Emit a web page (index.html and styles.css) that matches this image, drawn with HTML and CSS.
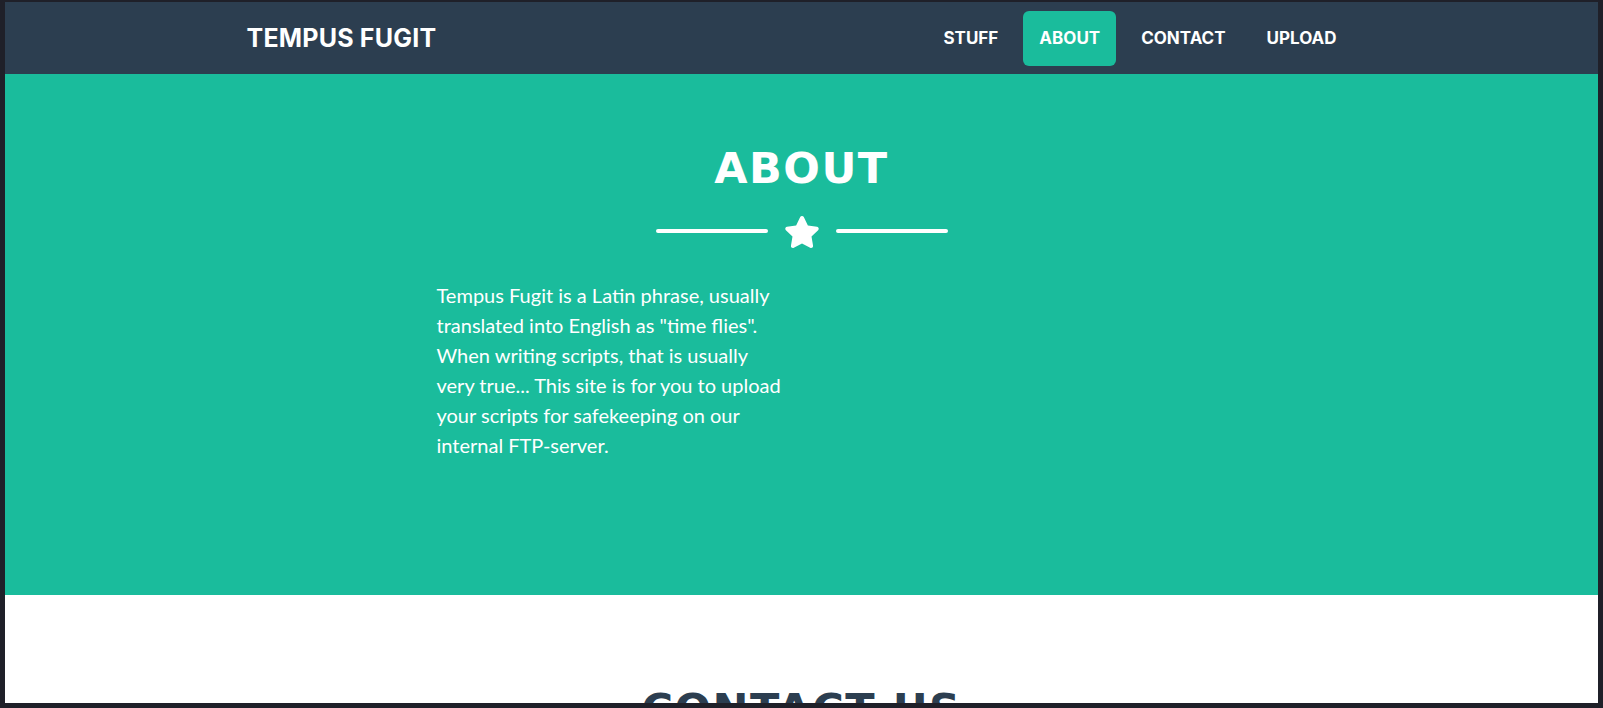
FILE: index.html
```html
<!DOCTYPE html>
<html lang="en">
<head>
<meta charset="utf-8">
<title>Tempus Fugit</title>
<link rel="stylesheet" href="styles.css">
</head>
<body>
<div class="frame">
  <nav class="navbar">
    <div class="container nav-inner">
      <a class="brand" href="#">Tempus Fugit</a>
      <ul class="nav-list">
        <li><a class="nav-link" href="#">Stuff</a></li>
        <li><a class="nav-link active" href="#">About</a></li>
        <li><a class="nav-link" href="#">Contact</a></li>
        <li><a class="nav-link" href="#">Upload</a></li>
      </ul>
    </div>
  </nav>

  <section class="section about">
    <div class="container">
      <h2 class="section-heading">About</h2>
      <div class="divider">
        <span class="divider-line"></span>
        <svg class="divider-icon" viewBox="0 0 576 512" width="36" height="32" aria-hidden="true"><path fill="currentColor" d="M259.3 17.8L194 150.2 47.9 171.5c-26.2 3.8-36.7 36.1-17.7 54.6l105.7 103-25 145.5c-4.5 26.3 23.2 46 46.4 33.7L288 439.6l130.7 68.7c23.2 12.2 50.9-7.4 46.4-33.7l-25-145.5 105.7-103c19-18.5 8.5-50.8-17.7-54.6L382 150.2 316.7 17.8c-11.7-23.6-45.6-23.9-57.4 0z"/></svg>
        <span class="divider-line"></span>
      </div>
      <div class="about-row">
        <div class="about-col">
          <p class="lead">Tempus Fugit is a Latin phrase, usually translated into English as "time flies". When writing scripts, that is usually very true... This site is for you to upload your scripts for safekeeping on our internal FTP-server.</p>
        </div>
        <div class="about-col"></div>
      </div>
    </div>
  </section>

  <section class="section contact">
    <div class="container">
      <h2 class="section-heading dark">Contact Us</h2>
    </div>
  </section>
</div>
</body>
</html>
```

FILE: styles.css
```css
* { box-sizing: border-box; }

html, body {
  margin: 0;
  padding: 0;
  height: 100%;
  overflow: hidden;
}

body {
  background: #1f2029;
  font-family: "Lato", "Liberation Sans", sans-serif;
}

.frame {
  margin: 2px 5px 0 5px;
  height: 701px;
  overflow: hidden;
  background: #ffffff;
}

.container {
  width: 1140px;
  margin: 0 auto;
  padding: 0 15px;
}

/* NAV */
.navbar {
  background: #2c3e50;
  height: 72px;
}

.nav-inner {
  height: 72px;
  display: flex;
  align-items: center;
  justify-content: space-between;
}

.brand {
  font-family: "Inter", "DejaVu Sans", sans-serif;
  font-weight: 700;
  font-size: 25px;
  text-transform: uppercase;
  color: #ffffff;
  text-decoration: none;
  letter-spacing: 0.2px;
}

.nav-list {
  list-style: none;
  margin: 0;
  padding: 0 4px 0 0;
  display: flex;
  gap: 9px;
}

.nav-link {
  display: block;
  height: 55px;
  line-height: 55px;
  padding: 0 16px;
  border-radius: 6px;
  font-family: "Inter", "DejaVu Sans", sans-serif;
  font-weight: 700;
  font-size: 17px;
  text-transform: uppercase;
  color: #ffffff;
  text-decoration: none;
}

.nav-link.active {
  background: #1abc9c;
}

/* SECTIONS */
.section-heading {
  margin: 0;
  font-family: "DejaVu Sans", "Inter", sans-serif;
  font-weight: 700;
  font-size: 43px;
  line-height: 52px;
  letter-spacing: 1.5px;
  text-align: center;
  text-transform: uppercase;
  color: #ffffff;
}

.section-heading.dark {
  color: #2c3e50;
}

.about {
  background: #1abc9c;
  padding: 68px 0 0;
  height: 521px;
}

.divider {
  margin-top: 22px;
  height: 32px;
  display: flex;
  align-items: center;
  justify-content: center;
  color: #ffffff;
}

.divider-line {
  width: 112px;
  height: 4px;
  border-radius: 4px;
  background: #ffffff;
  margin-bottom: 3px;
}

.divider-icon {
  display: block;
  margin: 0 16px;
}

.about-row {
  margin: 32px -15px 0;
  display: flex;
  justify-content: center;
}

.about-col {
  width: 380px;
  padding: 0 15px;
}

.lead {
  margin: 0;
  font-size: 20px;
  line-height: 30px;
  color: #ffffff;
}

.contact {
  background: #ffffff;
  padding-top: 88px;
}
```
